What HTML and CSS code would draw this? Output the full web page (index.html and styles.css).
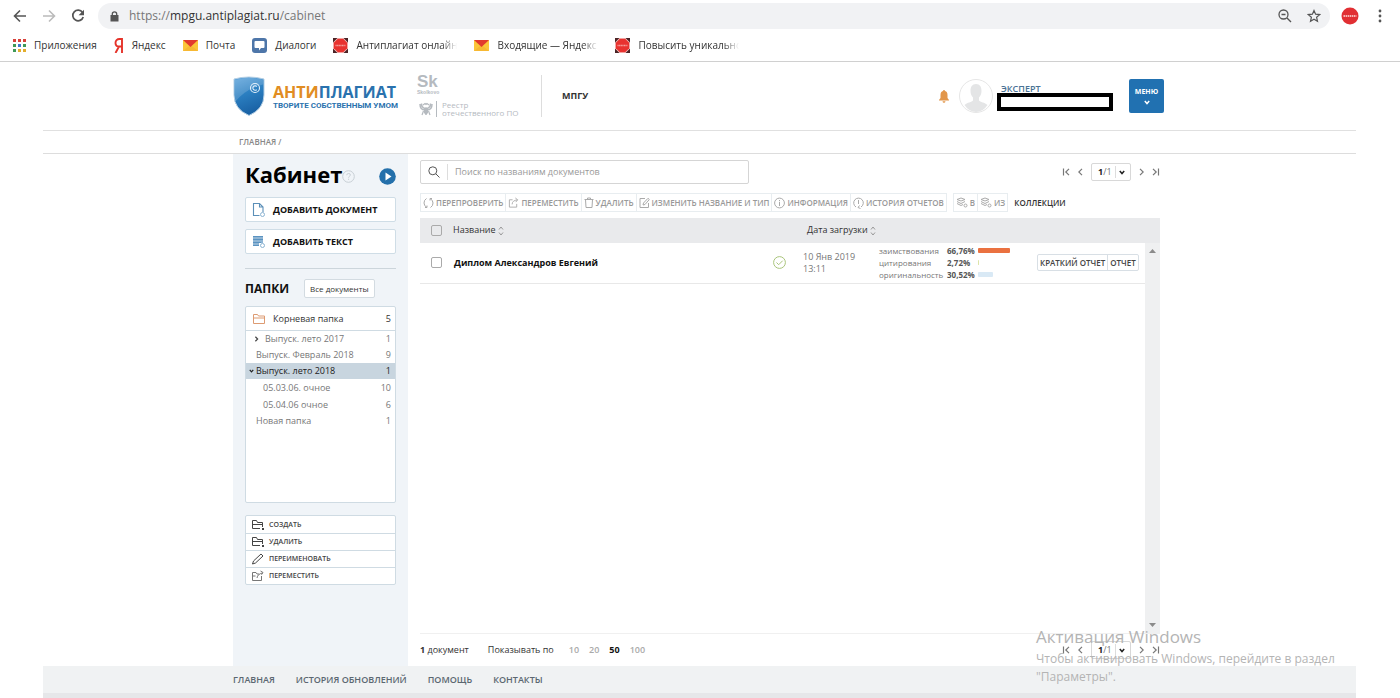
FILE: index.html
```html
<!DOCTYPE html>
<html lang="ru">
<head>
<meta charset="utf-8">
<title>Кабинет — Антиплагиат</title>
<link rel="stylesheet" href="styles.css">
</head>
<body>
<svg class="defs" aria-hidden="true">
  <defs>
    <linearGradient id="shield" x1="0" y1="0" x2="0.3" y2="1"><stop offset="0" stop-color="#5fa5dc"/><stop offset="0.5" stop-color="#2b7fc1"/><stop offset="1" stop-color="#1a62a5"/></linearGradient>
  </defs>
  <symbol id="mail" viewBox="0 0 15 11"><path fill="#fbc63a" d="M0 0h15v11H0z"/><path fill="#f4a92b" d="M0 11 7.500 5 15 11z" opacity=".5"/><path fill="#e23a2e" d="M0 0h15L7.500 7z"/></symbol>
  <symbol id="plag" viewBox="0 0 15 15"><path fill="#4a2326" d="M0 0h15v15H0z"/><path fill="#f7c9c6" d="M4.500 0h6L15 4.500v6L10.500 15h-6L0 10.500v-6z"/><path fill="#e8322f" d="M4.800 .8h5.400l4 4v5.400l-4 4H4.800l-4-4V4.800z"/><path stroke="#f4a09c" stroke-width="1.500" stroke-dasharray="1.200 .4" d="M2.500 7.500h10"/></symbol>
  <symbol id="folder" viewBox="0 0 14 12"><path fill="none" stroke="currentColor" d="M1.500 10.500V1.500h4l1 1.500h6v7.500zM1.500 5h11"/></symbol>
  <symbol id="folder-dot" viewBox="0 0 14 12"><path fill="none" stroke="currentColor" d="M9 9.500H1.500v-8h4l1 2h5V8M1.500 5.500h10"/><path fill="currentColor" d="M11 9h2v2h-2z"/></symbol>
  <symbol id="move" viewBox="0 0 12 12"><path fill="none" stroke="currentColor" d="M5 2.500H1.500v8h8V7M4.500 7.500c0-3 2-4.500 6-5M8 .5l2.500 2L8.500 5"/></symbol>
  <symbol id="sort" viewBox="0 0 6 10"><path fill="none" stroke="#999" d="M1 3.500 3 1l2 2.500M1 6.500 3 9l2-2.500"/></symbol>
  <symbol id="stack" viewBox="0 0 12 11"><path fill="none" stroke="currentColor" d="M1 2.500 5 1l4 1.500L5 4zM1 4.500 5 6.500l4-2M1 6.500l4 2 2-1"/><circle cx="9.500" cy="8.500" r="1.500" fill="none" stroke="currentColor"/></symbol>
  <symbol id="down" viewBox="0 0 6 5"><path fill="none" stroke="currentColor" stroke-width="1.500" d="M.8 1 3 3.500 5.200 1"/></symbol>
  <symbol id="first" viewBox="0 0 8 8"><path fill="none" stroke="currentColor" stroke-width="1.200" d="M1.500 .5v7M7 .8 3.800 4 7 7.200"/></symbol>
  <symbol id="prev" viewBox="0 0 5 8"><path fill="none" stroke="currentColor" stroke-width="1.200" d="M4 .8.800 4 4 7.200"/></symbol>
  <symbol id="next" viewBox="0 0 5 8"><path fill="none" stroke="currentColor" stroke-width="1.200" d="M1 .8 4.200 4 1 7.200"/></symbol>
  <symbol id="last" viewBox="0 0 8 8"><path fill="none" stroke="currentColor" stroke-width="1.200" d="M6.500 .5v7M1 .8 4.200 4 1 7.200"/></symbol>
</svg>

<header class="browser">
  <div class="toolbar">
    <button class="tool" aria-label="Назад"><svg width="14" height="14" viewBox="0 0 14 14"><path fill="none" stroke="#555" stroke-width="1.600" d="M13 7H2M7 1.500 1.500 7 7 12.500"/></svg></button>
    <button class="tool" aria-label="Вперёд"><svg width="14" height="14" viewBox="0 0 14 14"><path fill="none" stroke="#bbb" stroke-width="1.600" d="M1 7h11M7 1.500 12.500 7 7 12.500"/></svg></button>
    <button class="tool" aria-label="Обновить"><svg width="14" height="14" viewBox="0 0 14 14"><path fill="none" stroke="#555" stroke-width="1.700" d="M11.500 3.500A5.300 5.300 0 1 0 12.200 8"/><path fill="#555" d="M13 .8v5.400H7.600z"/></svg></button>
    <div class="address">
      <svg width="9" height="11" viewBox="0 0 9 11"><path fill="#555" d="M.5 4h8v6.500h-8z"/><path fill="none" stroke="#555" stroke-width="1.300" d="M2.300 4.500V3a2.200 2.200 0 0 1 4.400 0v1.500"/></svg>
      <span class="url">https://<span class="host">mpgu.antiplagiat.ru</span>/cabinet</span>
      <button class="tool" aria-label="Масштаб"><svg width="14" height="14" viewBox="0 0 14 14"><circle cx="5.500" cy="5.500" r="4.500" fill="none" stroke="#555" stroke-width="1.300"/><path stroke="#555" stroke-width="1.400" d="M3.500 5.500h4M9 9l4 4"/></svg></button>
      <button class="tool" aria-label="В закладки"><svg width="14" height="14" viewBox="0 0 14 14"><path fill="none" stroke="#555" stroke-width="1.200" d="m7 1.500 1.600 3.700 4.100.4-3.100 2.700.9 4L7 10.200l-3.500 2.100.9-4-3.100-2.700 4.100-.4z"/></svg></button>
    </div>
    <button class="tool ext" aria-label="Расширение"><svg width="18" height="18" viewBox="0 0 18 18"><circle cx="9" cy="9" r="8.500" fill="#e12f33"/><path stroke="#f6b5b4" stroke-width="2" stroke-dasharray="1.500 .6" d="M2.500 9h13"/></svg></button>
    <button class="tool" aria-label="Меню браузера"><svg width="4" height="14" viewBox="0 0 4 14"><g fill="#555"><circle cx="2" cy="2" r="1.400"/><circle cx="2" cy="7" r="1.400"/><circle cx="2" cy="12" r="1.400"/></g></svg></button>
  </div>
  <nav class="bookmarks">
    <a href="#"><svg width="13" height="13" viewBox="0 0 13 13"><path fill="#d8423a" d="M0 0h3v3H0zM5 0h3v3H5zM10 0h3v3h-3z"/><path fill="#3f9a57" d="M0 5h3v3H0zM10 5h3v3h-3z"/><path fill="#3f78d0" d="M5 5h3v3H5z"/><path fill="#3f9a57" d="M0 10h3v3H0z"/><path fill="#e3ae2d" d="M5 10h3v3H5zM10 10h3v3h-3z"/></svg>Приложения</a>
    <a href="#"><svg width="10" height="15" viewBox="0 0 10 15"><path fill="none" stroke="#e5332a" stroke-width="1.900" d="M8 15V1H5.500C3 1 1.500 2.500 1.500 5S3 8.500 5 8.500h3M5 8.500 1.500 15"/></svg>Яндекс</a>
    <a href="#"><svg width="15" height="11"><use href="#mail"/></svg>Почта</a>
    <a href="#"><svg width="15" height="15" viewBox="0 0 15 15"><rect width="15" height="15" rx="3" fill="#4e76a9"/><path fill="#fff" d="M3.500 3h8q1 0 1 1v5q0 1-1 1H9l-2 2.500V10H3.500q-1 0-1-1V4q0-1 1-1z"/></svg>Диалоги</a>
    <a href="#"><svg width="15" height="15"><use href="#plag"/></svg><span class="fade">Антиплагиат онлайн</span></a>
    <a href="#"><svg width="15" height="11"><use href="#mail"/></svg><span class="fade">Входящие — Яндекс</span></a>
    <a href="#"><svg width="15" height="15"><use href="#plag"/></svg><span class="fade">Повысить уникально</span></a>
  </nav>
</header>

<div class="site">
  <header class="head">
    <div class="wrap head-row">
      <a href="#" class="logo">
        <svg width="32" height="40" viewBox="0 0 32 40"><path fill="url(#shield)" stroke="#b4cfe4" d="M1 3Q16-1 31 3v16q0 14-15 20.500Q1 33 1 19z"/><path fill="#fff" opacity=".16" d="M2 4q14-4 28-.5v5Q12 13 2 26z"/><circle cx="22" cy="12" r="4.500" fill="none" stroke="#e4f0fa" stroke-width="1.100"/><path fill="none" stroke="#e4f0fa" stroke-width="1.100" d="M23.700 10.500a2.200 2.200 0 1 0 0 3"/></svg>
        <span class="logo-text"><span class="logo-name"><span class="orange">АНТИ</span>ПЛАГИАТ</span><span class="logo-sub">ТВОРИТЕ СОБСТВЕННЫМ УМОМ</span></span>
      </a>
      <div class="partners">
        <div class="sk">Sk<small>Skolkovo</small></div>
        <div class="registry">
          <svg width="14" height="15" viewBox="0 0 14 15"><g fill="none" stroke="#b5babf"><path d="M1 2q0 6 5 6M2.500 1.500q0 4 3.500 5M13 2q0 6-5 6M11.500 1.500q0 4-3.500 5" stroke-width="1.500"/><path d="M7 5v8M4.500 9 3 13M9.500 9l1.500 4M4 3l2-1.500 1 1 1-1L10 3" stroke-width="1.200"/></g><path fill="#b5babf" d="M5 6h4v5l-2 2-2-2z"/></svg>
          <span>Реестр<br>отечественного ПО</span>
        </div>
      </div>
      <div class="org">МПГУ</div>
      <button class="bell" aria-label="Уведомления"><svg width="10" height="13" viewBox="0 0 10 13"><path fill="#e2964a" d="M5 0q1 0 1 1 2.500.7 2.500 4v3L10 10v.5H0V10l1.500-2V5Q1.500 1.700 4 1 4 0 5 0zM3.500 11.200h3Q6.300 12.700 5 12.700t-1.500-1.500z"/></svg></button>
      <svg class="avatar" width="34" height="34" viewBox="0 0 34 34"><circle cx="17" cy="17" r="16.500" fill="#fff" stroke="#e6e6e6"/><path fill="#e4e5e6" d="M17 5c4 0 5.500 3 5.500 7 0 3-1 5-2.500 6.500v3c1 1.500 6 2 8.500 4.500Q24 33 17 33T5.500 26c2.500-2.500 7.500-3 8.500-4.500v-3C12.500 17 11.500 15 11.500 12c0-4 1.500-7 5.500-7z"/></svg>
      <div class="user"><a href="#">ЭКСПЕРТ</a><span class="redacted"></span></div>
      <button class="menu">МЕНЮ<svg width="6" height="5"><use href="#down"/></svg></button>
    </div>
  </header>
  <nav class="crumbs"><div class="wrap"><a href="#">ГЛАВНАЯ</a> /</div></nav>

  <div class="wrap body">
    <aside class="side">
      <div class="title-row">
        <h1>Кабинет</h1>
        <button class="icon" aria-label="Справка"><svg width="13" height="13" viewBox="0 0 13 13"><circle cx="6.500" cy="6.500" r="5.800" fill="none" stroke="#c8cfd5"/><path fill="none" stroke="#c8cfd5" d="M4.700 5.200q.1-1.700 1.900-1.700t1.800 1.500c0 1.200-1.800 1.200-1.800 2.700M6.600 8.700v1.200"/></svg></button>
        <button class="icon play" aria-label="Видео"><svg width="17" height="17" viewBox="0 0 17 17"><circle cx="8.500" cy="8.500" r="8.300" fill="#2470ab"/><path fill="#fff" d="m6.500 4.500 6 4-6 4z"/></svg></button>
      </div>
      <button class="add"><svg width="14" height="15" viewBox="0 0 14 15"><path fill="none" stroke="#5b8fb8" stroke-width="1.100" d="M7.500 13.500h-6V1.500h6L11 5v5M7.500 1.500V5H11"/><circle cx="10.500" cy="12.500" r="2" fill="#fff" stroke="#8bb3d2"/></svg>ДОБАВИТЬ ДОКУМЕНТ</button>
      <button class="add"><svg width="14" height="15" viewBox="0 0 14 15"><path fill="#8fb5d4" d="M1 2h10v7H7v3H1z"/><path stroke="#5b93c1" d="M1 2.500h10M1 5.500h10M1 8.500h8M1 11.500h6"/><circle cx="10.500" cy="11.500" r="2" fill="#fff" stroke="#8bb3d2"/></svg>ДОБАВИТЬ ТЕКСТ</button>
      <hr>
      <div class="folders-head"><h2>ПАПКИ</h2><button>Все документы</button></div>
      <ul class="tree">
        <li class="root"><svg width="14" height="12"><use href="#folder"/></svg>Корневая папка<span>5</span></li>
        <li class="closed"><svg width="5" height="6" viewBox="0 0 5 8"><path fill="none" stroke="#444" stroke-width="1.600" d="M1 1 4 4 1 7"/></svg>Выпуск. лето 2017<span>1</span></li>
        <li>Выпуск. Февраль 2018<span>9</span></li>
        <li class="open"><svg width="5" height="4" viewBox="0 0 6 5"><use href="#down"/></svg>Выпуск. лето 2018<span>1</span></li>
        <li class="child">05.03.06. очное<span>10</span></li>
        <li class="child">05.04.06 очное<span>6</span></li>
        <li>Новая папка<span>1</span></li>
      </ul>
      <div class="actions">
        <button><svg width="14" height="12"><use href="#folder-dot"/></svg>СОЗДАТЬ</button>
        <button><svg width="14" height="12"><use href="#folder-dot"/></svg>УДАЛИТЬ</button>
        <button><svg width="14" height="12" viewBox="0 0 14 12"><path fill="none" stroke="currentColor" d="m1.500 11 1-3L10 1l2 2-7.500 7z"/></svg>ПЕРЕИМЕНОВАТЬ</button>
        <button><svg width="14" height="12" viewBox="0 0 14 12"><path fill="none" stroke="#777" d="M1.500 10.500v-8h3.500l1 1.500h2M1.500 6h3M1.500 10.500h9V6M6 8q.5-4 5.500-5M9.500 1l2.500 1.500-1.500 2.200"/></svg>ПЕРЕМЕСТИТЬ</button>
      </div>
    </aside>

    <main class="main">
      <div class="search-row">
        <div class="search">
          <button aria-label="Найти"><svg width="12" height="12" viewBox="0 0 12 12"><circle cx="4.800" cy="4.800" r="4" fill="none" stroke="#555"/><path stroke="#555" d="m7.800 7.800 3.700 3.700"/></svg></button>
          <input type="text" aria-label="Поиск" placeholder="Поиск по названиям документов">
        </div>
        <div class="pager">
          <button aria-label="Первая"><svg width="8" height="8"><use href="#first"/></svg></button>
          <button aria-label="Предыдущая"><svg width="5" height="8"><use href="#prev"/></svg></button>
          <button class="page" aria-haspopup="listbox"><span><b>1</b>/1</span><svg width="6" height="5"><use href="#down"/></svg></button>
          <button aria-label="Следующая"><svg width="5" height="8"><use href="#next"/></svg></button>
          <button aria-label="Последняя"><svg width="8" height="8"><use href="#last"/></svg></button>
        </div>
      </div>

      <div class="tools">
        <div class="group">
          <button><svg width="11" height="12" viewBox="0 0 11 12"><path fill="none" stroke="currentColor" d="M3.500 1.500Q1 3 1 6t3 4.500M4 8.500v2H2M7.500 10.500Q10 9 10 6T7 1.500M7 3.500v-2h2"/></svg>ПЕРЕПРОВЕРИТЬ</button>
          <button><svg width="11" height="12"><use href="#move"/></svg>ПЕРЕМЕСТИТЬ</button>
          <button><svg width="10" height="12" viewBox="0 0 10 12"><path fill="none" stroke="currentColor" d="M.5 2.500h9M3.500 2.500v-1.500h3v1.500M1.500 2.500l.5 8h6l.5-8"/></svg>УДАЛИТЬ</button>
          <button><svg width="11" height="12" viewBox="0 0 11 12"><path fill="none" stroke="currentColor" d="M6 1.500H1v9h8.500V6M4 8l.5-2L9 1.300l1.300 1.200L6 7.500z"/></svg>ИЗМЕНИТЬ НАЗВАНИЕ И ТИП</button>
          <button><svg width="11" height="12" viewBox="0 0 11 12"><circle cx="5.500" cy="6" r="4.900" fill="none" stroke="currentColor"/><path stroke="currentColor" d="M5.500 5v4M5.500 3v1.200"/></svg>ИНФОРМАЦИЯ</button>
          <button><svg width="11" height="12" viewBox="0 0 11 12"><path fill="none" stroke="currentColor" d="M3 10A4.800 4.800 0 1 1 8 10M5.500 3v4M6.500 8.500 5 10.500l2.500 1"/></svg>ИСТОРИЯ ОТЧЕТОВ</button>
        </div>
        <div class="group">
          <button><svg width="12" height="11"><use href="#stack"/></svg>В</button>
          <button><svg width="12" height="11"><use href="#stack"/></svg>ИЗ</button>
        </div>
        <span class="collections">КОЛЛЕКЦИИ</span>
      </div>

      <div class="list">
        <table>
          <thead><tr>
            <th class="c-check"><input type="checkbox" aria-label="Выбрать все"></th>
            <th colspan="2">Название <svg width="6" height="10"><use href="#sort"/></svg></th>
            <th colspan="3"><span class="date-head">Дата загрузки <svg width="6" height="10"><use href="#sort"/></svg></span></th>
          </tr></thead>
          <tbody><tr>
            <td class="c-check"><input type="checkbox" aria-label="Диплом Александров Евгений"></td>
            <td class="c-doc">Диплом Александров Евгений</td>
            <td class="c-ok"><svg width="13" height="13" viewBox="0 0 13 13"><circle cx="6.500" cy="6.500" r="5.900" fill="none" stroke="#a9c47a"/><path fill="none" stroke="#a9c47a" d="m3.500 6.500 2.200 2.200 4-4"/></svg></td>
            <td class="c-date">10 Янв 2019<br>13:11</td>
            <td class="c-stat">
              <div class="stat"><span>заимствования</span><b>66,76%</b><i class="bar red" style="width:32px"></i></div>
              <div class="stat"><span>цитирования</span><b>2,72%</b><i class="bar green" style="width:1px"></i></div>
              <div class="stat"><span>оригинальность</span><b>30,52%</b><i class="bar blue" style="width:15px"></i></div>
            </td>
            <td class="c-report"><div class="reports"><button>КРАТКИЙ ОТЧЕТ</button><button>ОТЧЕТ</button></div></td>
          </tr></tbody>
        </table>
        <div class="scroll"><svg width="7" height="4" viewBox="0 0 7 4"><path fill="#8b8b8b" d="M0 4 3.500 0 7 4z"/></svg><svg width="7" height="4" viewBox="0 0 7 4"><path fill="#8b8b8b" d="M0 0h7L3.500 4z"/></svg></div>
      </div>

      <div class="foot-row">
        <span><b>1</b> документ</span>
        <span class="per">Показывать по</span>
        <a href="#">10</a><a href="#">20</a><a href="#" class="on">50</a><a href="#">100</a>
        <div class="pager">
          <button aria-label="Первая"><svg width="8" height="8"><use href="#first"/></svg></button>
          <button aria-label="Предыдущая"><svg width="5" height="8"><use href="#prev"/></svg></button>
          <button class="page" aria-haspopup="listbox"><span><b>1</b>/1</span><svg width="6" height="5"><use href="#down"/></svg></button>
          <button aria-label="Следующая"><svg width="5" height="8"><use href="#next"/></svg></button>
          <button aria-label="Последняя"><svg width="8" height="8"><use href="#last"/></svg></button>
        </div>
      </div>
    </main>
  </div>

  <footer class="footer"><nav class="wrap"><a href="#">ГЛАВНАЯ</a><a href="#">ИСТОРИЯ ОБНОВЛЕНИЙ</a><a href="#">ПОМОЩЬ</a><a href="#">КОНТАКТЫ</a></nav></footer>
</div>
<div class="activation"><p class="act-title">Активация Windows</p><p>Чтобы активировать Windows, перейдите в раздел "Параметры".</p></div>
</body>
</html>
```
FILE: styles.css
```css
* { box-sizing: border-box; }
body {
  margin: 0;
  min-height: 100vh;
  position: relative;
  display: flex;
  flex-direction: column;
  background: #fff;
  color: #333;
  font: 9px/12px "Open Sans", "Noto Sans", sans-serif;
}
.defs { position: absolute; width: 0; height: 0; }
svg { display: block; flex: none; }
button { display: flex; align-items: center; margin: 0; padding: 0; border: 0; background: none; color: inherit; font: inherit; white-space: nowrap; }
a { color: inherit; text-decoration: none; }
h1, h2, p, ul { margin: 0; padding: 0; }

.browser { border-bottom: 1px solid #d0d0d0; height: 62px; }
.toolbar { display: flex; align-items: center; gap: 15px; height: 32px; padding: 0 18px 0 13px; }
.address { flex: 1; display: flex; align-items: center; height: 26px; margin: 0 -4px 0 -2px; padding: 0 9px 0 12px; border-radius: 13px; background: #f1f2f4; gap: 15px; }
.ext { margin-right: 4px; }
.url { flex: 1; margin-left: -5px; font-size: 12px; color: #777; }
.host { color: #333; }
.bookmarks { display: flex; align-items: center; height: 26px; padding: 0 13px; gap: 17px; font-size: 10px; line-height: 15px; color: #333; white-space: nowrap; }
.bookmarks a { display: flex; align-items: center; gap: 8px; }
.fade { width: 101px; overflow: hidden; -webkit-mask-image: linear-gradient(to right, #000 85%, transparent); mask-image: linear-gradient(to right, #000 85%, transparent); }

.site { flex: 1; display: flex; flex-direction: column; margin: 0 44px 0 43px; }
.wrap { width: 100%; max-width: 933px; margin: 0 auto; padding-right: 6px; }
.head { border-bottom: 1px solid #e0e0e0; }
.head-row { display: flex; align-items: center; height: 68px; }
.logo { display: flex; align-items: center; gap: 8px; width: 163px; }
.logo-text { display: flex; flex-direction: column; color: #2a72ae; white-space: nowrap; }
.logo-name { font-size: 16px; line-height: 18px; font-weight: 700; }
.orange { color: #e18d22; }
.logo-sub { font-family: Roboto, "Open Sans", sans-serif; font-size: 8px; line-height: 9px; font-weight: 700; }
.partners { display: flex; flex-direction: column; justify-content: space-between; width: 125px; height: 42px; margin-left: 21px; border-right: 1px solid #ddd; color: #b5babf; }
.sk { font: 700 17px/14px "Liberation Sans", sans-serif; }
.sk small { display: block; font-size: 5px; line-height: 6px; }
.registry { display: flex; gap: 3px; align-items: center; font-weight: 500; font-size: 8px; line-height: 8px; }
.registry span { border-left: 1px solid #b5babf; padding-left: 5px; white-space: nowrap; }
.registry svg { margin-left: 2px; }
.org { margin-left: 20px; font-weight: 700; flex: 1; }
.avatar { margin: 0 4px 0 10px; }
.user { width: 116px; color: #4a7295; font-weight: 600; }
.user a { display: block; padding: 2px 0 0 4px; line-height: 9px; }
.redacted { display: block; height: 18px; border: 4px solid #000; background: #fff; }
.menu { flex-direction: column; justify-content: center; width: 35px; height: 34px; margin: 0 -4px 0 16px; gap: 3px; border-radius: 2px; background: #2171b1; color: #fff; font-size: 7px; line-height: 10px; font-weight: 700; }
.crumbs { border-bottom: 1px solid #ddd; height: 23px; color: #888; font-size: 8px; font-weight: 600; line-height: 22px; }
.crumbs .wrap { padding-left: 6px; }

.body { flex: 1; display: flex; gap: 12px; }
.side { width: 175px; padding: 8px 12px 0 12px; background: #f0f4f8; }
.title-row { display: flex; align-items: center; height: 28px; }
h1 { padding-bottom: 4px; color: #000; font-size: 22px; line-height: 24px; }
.play { margin-left: auto; }
.add { width: 100%; height: 25px; margin-top: 7px; padding-left: 6px; gap: 7px; border: 1px solid #cfdde6; border-radius: 2px; background: #fff; color: #111; font-weight: 700; }
hr { margin: 14px 0 10px; border: 0; border-top: 1px solid #ccd5db; }
.folders-head { display: flex; align-items: center; gap: 15px; }
h2 { color: #111; font-size: 12px; line-height: 18px; }
.folders-head button { height: 19px; padding: 0 5px; border: 1px solid #d3dbe1; border-radius: 2px; background: #fff; font-size: 8px; }
.tree { height: 197px; margin-top: 8px; border: 1px solid #cfdbe3; border-radius: 2px; background: #fff; color: #777; list-style: none; }
.tree li { display: flex; align-items: center; height: 16px; padding: 0 4px 0 10px; line-height: 16px; }
.tree span { margin-left: auto; }
.tree .root { height: 24px; padding-left: 6px; gap: 7px; border-bottom: 1px solid #cfdbe3; color: #333; }
.root svg { color: #dd9b72; }
.tree .closed { padding-left: 8px; gap: 6px; }
.tree .open { padding-left: 3px; gap: 2px; background: #c8d5df; color: #222; }
.tree .child { padding-left: 17px; height: 17px; }
.actions { margin-top: 12px; border: 1px solid #cfdbe3; border-radius: 2px; background: #fff; }
.actions button { width: 100%; height: 17px; padding-left: 5px; gap: 4px; font-size: 7px; font-weight: 600; color: #444; }
.actions button + button { border-top: 1px solid #cfdbe3; }

.main { flex: 1; min-width: 0; display: flex; flex-direction: column; padding-top: 6px; }
.search-row { display: flex; justify-content: space-between; align-items: center; }
.search { display: flex; width: 329px; height: 24px; border: 1px solid #d5d5d5; border-radius: 2px; }
.search button { width: 27px; margin: 3px 0; justify-content: center; border-right: 1px solid #ddd; }
.search input { flex: 1; min-width: 0; padding: 0 7px; border: 0; background: none; font: inherit; }
.search input::placeholder { color: #999; opacity: 1; }
.pager { display: flex; align-items: center; gap: 8px; color: #777; }
.page { width: 40px; height: 18px; border: 1px solid #d8d8d8; border-radius: 2px; justify-content: space-between; padding: 0 5px 0 6px; }
.page span { padding-right: 3px; border-right: 1px solid #ddd; }
.page b, .page svg { color: #222; }
.tools { display: flex; align-items: center; gap: 6px; margin-top: 9px; color: #999; font-size: 8px; font-weight: 600; }
.group { display: flex; border: 1px solid #e8edf0; }
.group button { height: 17px; padding: 0 2px; gap: 2px; }
.group button + button { border-left: 1px solid #e8edf0; }
.group svg { color: #aaa; }
.collections { color: #333; }

.list { flex: 1; display: flex; align-items: stretch; margin-top: 6px; border-bottom: 1px solid #f0f0f0; }
table { flex: 1; align-self: flex-start; border-collapse: collapse; table-layout: fixed; }
th { height: 25px; padding: 0; background: #e9eaec; text-align: left; font-weight: 500; line-height: 10px; }
th svg { display: inline-block; vertical-align: middle; }
td { height: 40px; padding: 0; border-bottom: 1px solid #e8e8e8; }
.c-check { width: 33px; padding-left: 11px; }
.c-check input { display: block; appearance: none; width: 11px; height: 11px; margin: 0; border: 1px solid #aaa; border-radius: 2px; background: transparent; }
.c-doc { padding-left: 1px; color: #111; font-weight: 700; width: 320px; }
.c-ok { width: 30px; }
.date-head { padding-left: 4px; }
.c-date { width: 76px; color: #777; }
.c-stat { width: 158px; color: #777; font-size: 8px; }
.stat { display: flex; align-items: center; height: 12px; }
.stat span { width: 68px; white-space: nowrap; }
.stat b { width: 31px; color: #555; }
.bar { height: 5px; border-radius: 1px; }
.red { background: #ea7140; }
.green { background: #dde5a8; }
.blue { background: #d9e9f5; }
.reports { display: inline-flex; border: 1px solid #d8dfe5; border-radius: 2px; vertical-align: middle; }
.reports button { height: 15px; padding: 0 2px; font-size: 8px; font-weight: 600; color: #444; }
.reports button + button { border-left: 1px solid #d8dfe5; }
.scroll { display: flex; flex-direction: column; align-items: center; justify-content: space-between; width: 15px; padding: 31px 0 6px; background: linear-gradient(#e9eaec 25px, #eff0f1 25px); }
.foot-row { display: flex; align-items: center; height: 32px; color: #333; }
.foot-row a { margin-right: 10px; color: #aaa; font-weight: 600; }
.foot-row .on { color: #111; font-weight: 700; }
.per { margin: 0 15px 0 19px; }
.foot-row .pager { margin-left: auto; }

.footer { height: 32px; border-bottom: 5px solid #e6e7e9; background: #f0f2f3; color: #5b6771; font-weight: 600; line-height: 27px; }
.footer nav { display: flex; gap: 21px; }
.activation { position: absolute; right: 0; bottom: 12px; width: 364px; padding-right: 50px; color: #b4b4b4; font-size: 12px; line-height: 18px; }
.act-title { font-size: 17px; line-height: 26px; }
```
